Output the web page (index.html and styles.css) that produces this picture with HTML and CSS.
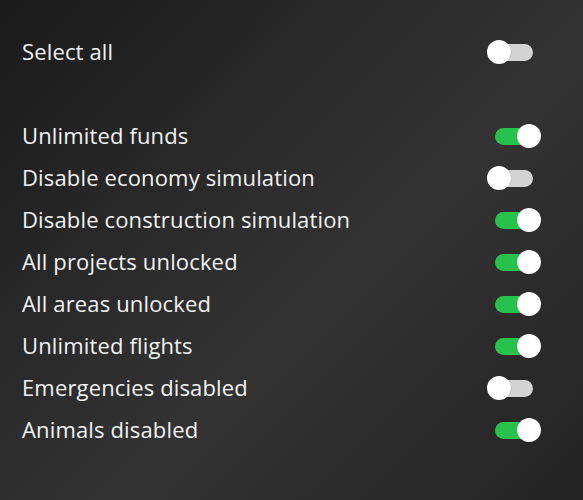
FILE: index.html
```html
<!DOCTYPE html>
<html lang="en">
<head>
<meta charset="utf-8">
<title>Cheats</title>
<link rel="stylesheet" href="styles.css">
</head>
<body>
<div class="panel">
  <div class="row select-all">
    <span class="label">Select all</span>
    <span class="toggle off"><span class="track"></span><span class="knob"></span></span>
  </div>
  <div class="list">
    <div class="row"><span class="label">Unlimited funds</span><span class="toggle on"><span class="track"></span><span class="knob"></span></span></div>
    <div class="row"><span class="label">Disable economy simulation</span><span class="toggle off"><span class="track"></span><span class="knob"></span></span></div>
    <div class="row"><span class="label">Disable construction simulation</span><span class="toggle on"><span class="track"></span><span class="knob"></span></span></div>
    <div class="row"><span class="label">All projects unlocked</span><span class="toggle on"><span class="track"></span><span class="knob"></span></span></div>
    <div class="row"><span class="label">All areas unlocked</span><span class="toggle on"><span class="track"></span><span class="knob"></span></span></div>
    <div class="row"><span class="label">Unlimited flights</span><span class="toggle on"><span class="track"></span><span class="knob"></span></span></div>
    <div class="row"><span class="label">Emergencies disabled</span><span class="toggle off"><span class="track"></span><span class="knob"></span></span></div>
    <div class="row"><span class="label">Animals disabled</span><span class="toggle on"><span class="track"></span><span class="knob"></span></span></div>
  </div>
</div>
</body>
</html>
```

FILE: styles.css
```css
html, body {
  margin: 0;
  padding: 0;
}
body {
  width: 583px;
  height: 500px;
  overflow: hidden;
  background: linear-gradient(135deg, #1a1a1a 0%, #2c2c2c 40%, #333333 58%, #2a2a2a 80%, #242424 100%);
  font-family: "Open Sans", "Noto Sans", sans-serif;
  color: #f2f2f2;
}
.panel {
  padding: 31px 42px 0 22px;
}
.row {
  height: 42px;
  display: flex;
  align-items: center;
  justify-content: space-between;
}
.label {
  font-size: 22px;
  line-height: 40px;
  padding-bottom: 2px;
  letter-spacing: 0.15px;
}
.list {
  margin-top: 42px;
}
.toggle {
  position: relative;
  width: 54px;
  height: 24px;
  display: block;
}
.track {
  position: absolute;
  top: 3.5px;
  width: 44px;
  height: 17px;
  border-radius: 9px;
}
.knob {
  position: absolute;
  top: 0;
  width: 24px;
  height: 24px;
  border-radius: 50%;
  background: #ffffff;
  box-shadow: 0 0 1px rgba(0,0,0,0.3);
}
.toggle.off .track {
  left: 2px;
  background: #d3d3d3;
}
.toggle.off .knob {
  left: 0;
}
.toggle.on .track {
  left: 8px;
  background: #27c24c;
}
.toggle.on .knob {
  right: 0;
}
```
